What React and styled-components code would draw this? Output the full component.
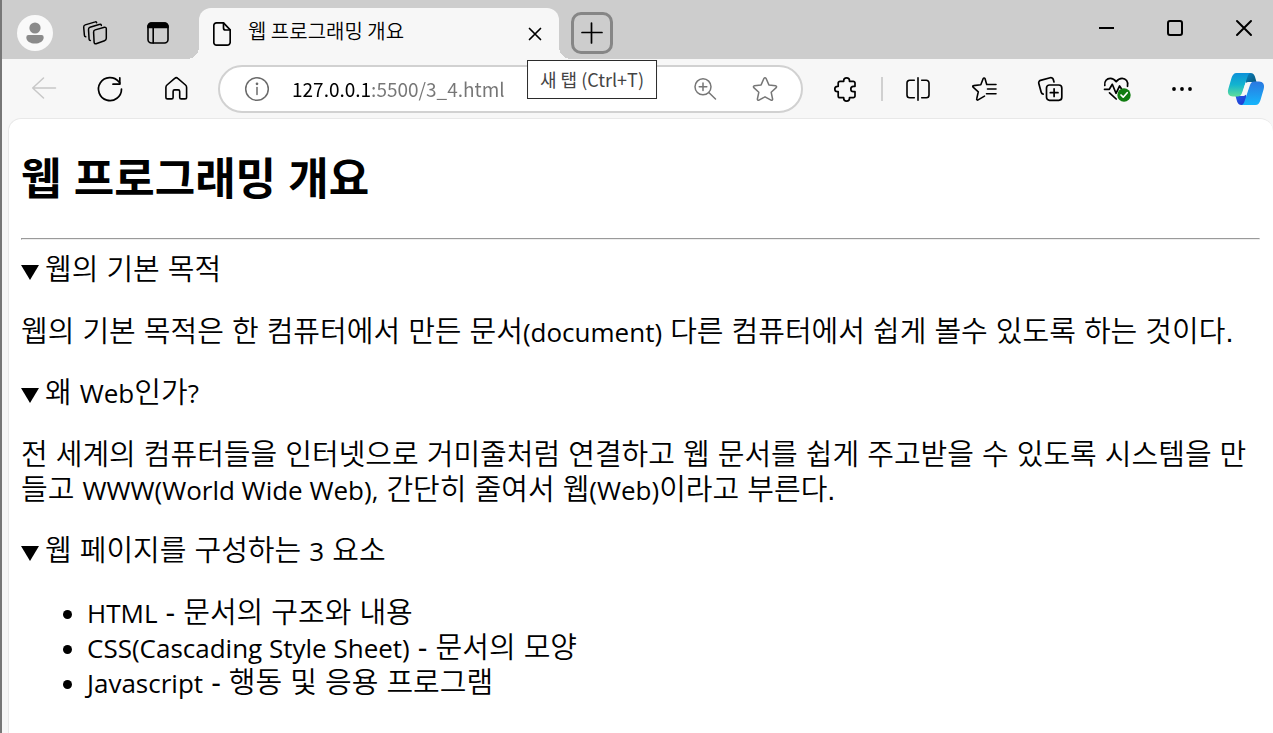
import { useState } from 'react';
import styled, { createGlobalStyle } from 'styled-components';

const GlobalStyle = createGlobalStyle`
  * {
    box-sizing: border-box;
  }

  body {
    margin: 0;
    background: #f7f7f7;
    color: #000;
    font-family: 'Noto Sans CJK KR', sans-serif;
  }
`;

const Window = styled.div`
  display: flex;
  flex-direction: column;
  min-height: 100vh;
  border-left: 2px solid #777;
  background: #f7f7f7;
`;

const TabStrip = styled.header`
  display: flex;
  height: 59px;
  padding-left: 15px;
  background: #cdcdcd;
`;

const StripTools = styled.div`
  display: flex;
  align-items: center;
  gap: 22px;
  height: 50px;
  margin-top: 8px;
  padding-right: 22px;
`;

const IconButton = styled.button`
  display: flex;
  flex: none;
  align-items: center;
  justify-content: center;
  width: ${({ $width }) => $width || 40}px;
  height: 40px;
  padding: 0;
  border: 0;
  background: none;
  color: ${({ $color }) => $color || '#000'};

  svg {
    flex: none;
    overflow: visible;
  }
`;

const ProfileButton = styled(IconButton)`
  width: 36px;
  height: 36px;
  border-radius: 50%;
  background: #f9f9f9;
`;

const Tab = styled.div`
  position: relative;
  display: flex;
  flex: 0 1 360px;
  align-items: center;
  min-width: 0;
  height: 51px;
  margin-top: 8px;
  padding: 0 4px 0 14px;
  border-radius: 12px 12px 0 0;
  background: #f7f7f7;

  &::before,
  &::after {
    content: '';
    position: absolute;
    bottom: 0;
    width: 12px;
    height: 12px;
  }

  &::before {
    right: 100%;
    background: radial-gradient(circle at 0 0, transparent 12px, #f7f7f7 12px);
  }

  &::after {
    left: 100%;
    background: radial-gradient(circle at 100% 0, transparent 12px, #f7f7f7 12px);
  }
`;

const TabTitle = styled.span`
  flex: 1;
  padding: 0 0 6px 17px;
  overflow: hidden;
  font-size: 20px;
  font-weight: 350;
  line-height: 28px;
  text-overflow: ellipsis;
  white-space: nowrap;
`;

const NewTab = styled.div`
  position: relative;
  margin: 12px 0 0 12px;
`;

const NewTabButton = styled(IconButton)`
  width: 42px;
  height: 42px;
  border: 3px solid #868686;
  border-radius: 10px;
`;

const Tooltip = styled.span`
  position: absolute;
  top: 48px;
  left: 50%;
  z-index: 1;
  padding: 5px 12px;
  border: 1px solid #2b2b2b;
  background: #fff;
  color: #444;
  font-size: 18px;
  line-height: 27px;
  white-space: nowrap;
  transform: translateX(-50%);
`;

const WindowControls = styled.div`
  display: flex;
  gap: 11px;
  margin: 8px 0 0 auto;
`;

const Toolbar = styled.nav`
  display: flex;
  align-items: center;
  height: 59px;
  padding: 0 9px 0 22px;
`;

const ToolGroup = styled.div`
  display: flex;
  align-items: center;
  gap: 26px;
`;

const Divider = styled.span`
  width: 2px;
  height: 24px;
  margin: 0 15px 0 16px;
  background: #d0d0d0;
`;

const AddressBar = styled.form`
  display: flex;
  flex: 1;
  align-items: center;
  min-width: 0;
  height: 48px;
  margin: 0 22px;
  padding: 0 16px 0 17px;
  border: 2px solid #d1d1d1;
  border-radius: 24px;
  background: #fff;
`;

/* host part is black, the rest of the address is grey */
const AddressInput = styled.input`
  flex: 1;
  min-width: 0;
  height: 36px;
  margin: 0 20px 0 15px;
  padding: 0;
  border: 0;
  outline: 0;
  background: linear-gradient(to right, #000 79px, #767676 79px);
  background-clip: text;
  -webkit-text-fill-color: transparent;
  font-family: 'Noto Sans CJK KR', sans-serif;
  font-size: 19px;
`;

const AddressActions = styled.div`
  display: flex;
  gap: 20px;
`;

const Page = styled.main`
  flex: 1;
  margin-left: 6px;
  padding: 0 13px 0 12px;
  border: 1px solid #e8e8e8;
  border-width: 1px 0 0 1px;
  border-radius: 13px 13px 0 0;
  background: #fff;
  font-family: 'Liberation Sans', 'Noto Sans CJK KR', sans-serif;
  font-size: 29px;
  font-weight: 350;
  line-height: 35px;

  h2 {
    margin: 34px 0 32px;
    font-size: 44px;
    font-weight: 700;
    line-height: 53px;
  }

  hr {
    margin: 13px 0;
  }

  p {
    margin: 27px 0 26px;
    word-break: normal;
  }

  ul {
    margin: 27px 0;
    padding-left: 66px;
  }
`;

const Summary = styled.summary`
  list-style: none;

  &::before {
    content: '';
    display: inline-block;
    width: 18px;
    height: 15px;
    margin-right: 6px;
    background: #000;
    clip-path: polygon(0 0, 100% 0, 50% 100%);
  }
`;

const Latin = styled.span`
  font-family: 'Open Sans', sans-serif;
  font-size: 26px;
  font-weight: 400;
  line-height: 26px;
`;

const Svg = ({ w = 24, h = 24, stroke = 2, children }) => (
  <svg
    width={w}
    height={h}
    viewBox={`0 0 ${w} ${h}`}
    fill="none"
    stroke="currentColor"
    strokeWidth={stroke}
    strokeLinecap="round"
    strokeLinejoin="round"
    aria-hidden="true"
  >
    {children}
  </svg>
);

const ProfileIcon = () => (
  <Svg>
    <g fill="#8b8b8b" stroke="none">
      <circle cx="12" cy="7" r="5.6" />
      <path d="M5.5 14h13a2.2 2.2 0 0 1 2.2 2.2c0 4-4 6.300-8.700 6.300s-8.700-2.300-8.700-6.300A2.200 2.200 0 0 1 5.500 14z" />
    </g>
  </Svg>
);

const WorkspacesIcon = () => (
  <Svg stroke={1.5}>
    <path d="M12.200 8.900 21.400 6.200a1.500 1.500 0 0 1 1.900 1.500v9.600a2.500 2.500 0 0 1-1.800 2.400l-8.400 3a1.500 1.500 0 0 1-2-1.400l-.5-10.200a2.200 2.200 0 0 1 1.600-2.200z" />
    <path d="M18.300 4.600v-.3a1 1 0 0 0-1.400-1L7 6.300a2.200 2.200 0 0 0-1.500 2.300l.6 9.700a1.200 1.200 0 0 0 1.300 1.100" />
    <path d="M13.600 1.800v-.1a1 1 0 0 0-1.300-.8L2.200 3.900A2.200 2.200 0 0 0 .7 6.200l.7 8a1.600 1.600 0 0 0 1.300 1.600" />
  </Svg>
);

const SidebarIcon = () => (
  <Svg stroke={1.6}>
    <rect x="3" y="2" width="20" height="20" rx="3.500" />
    <path d="M3 6.500v-1A3.500 3.500 0 0 1 6.500 2h13A3.500 3.500 0 0 1 23 5.500v1z" fill="currentColor" />
    <path d="M8.200 7v15" />
  </Svg>
);

const FileIcon = () => (
  <Svg w={18} h={26} stroke={1.700}>
    <path d="M3.500 1.800h7l6.700 7v12.400a3 3 0 0 1-3 3H3.500a2.700 2.700 0 0 1-2.700-2.700v-17a2.700 2.700 0 0 1 2.700-2.700z" />
    <path d="M10.500 2v5a2 2 0 0 0 2 2h4.600" />
  </Svg>
);

const BackIcon = () => (
  <Svg stroke={1.5}>
    <path d="M23.500 11H.7M11.500 1 .7 11l10.800 10" />
  </Svg>
);

const ReloadIcon = () => (
  <Svg stroke={1.700}>
    <path d="M23.500 12A11.500 11.500 0 1 1 20.800 4.700L21.800 6" />
    <path d="M21.800.8v6.400H15" />
  </Svg>
);

const HomeIcon = () => (
  <Svg stroke={1.600}>
    <path d="M10.700 1.300 3 8a3.200 3.200 0 0 0-1.100 2.400v9.800a1.700 1.700 0 0 0 1.700 1.700h4a1.500 1.500 0 0 0 1.500-1.500v-6a1.500 1.500 0 0 1 1.500-1.500h3.600a1.500 1.500 0 0 1 1.500 1.500v6a1.500 1.500 0 0 0 1.500 1.500h3.700a1.700 1.700 0 0 0 1.700-1.700v-9.800A3.200 3.200 0 0 0 21.500 8l-7.700-6.700a2.300 2.300 0 0 0-3.100 0z" />
  </Svg>
);

const InfoIcon = () => (
  <Svg stroke={1.500}>
    <circle cx="12" cy="12" r="11.300" />
    <path d="M12 10.500v7" />
    <circle cx="12" cy="6.800" r=".6" fill="currentColor" />
  </Svg>
);

const ZoomIcon = () => (
  <Svg stroke={1.500}>
    <circle cx="10" cy="9.800" r="8" />
    <path d="M15.800 15.500 22.500 22M10 6v7.600M6.200 9.800h7.600" />
  </Svg>
);

const StarIcon = () => (
  <Svg stroke={1.500}>
    <path d="M11 1.300a1.200 1.200 0 0 1 2 0l2.900 6.600 6.700.8a1.100 1.100 0 0 1 .6 1.900l-5 4.700 1.400 6.700a1.100 1.100 0 0 1-1.600 1.200L12 19.800l-6 3.400A1.100 1.100 0 0 1 4.400 22l1.400-6.700-5-4.700a1.100 1.100 0 0 1 .6-1.900l6.700-.8z" />
  </Svg>
);

const PuzzleIcon = () => (
  <Svg stroke={1.700}>
    <path d="M7 4.300h3.700v-.6a2.900 2.900 0 0 1 5.800 0v.6h3.700a1.800 1.800 0 0 1 1.800 1.800v3.200h-1.500a2.700 2.700 0 0 0 0 5.400H22v4.200a1.800 1.800 0 0 1-1.800 1.800h-3.700v.5a2.900 2.900 0 0 1-5.800 0v-.5H7a1.800 1.800 0 0 1-1.800-1.800v-4.200h-.7a2.700 2.700 0 0 1 0-5.400h.7V6.100A1.800 1.800 0 0 1 7 4.300z" />
  </Svg>
);

const SplitIcon = () => (
  <Svg stroke={1.600}>
    <path d="M12 .7v22.600M8.300 3.300H3.700A2.700 2.700 0 0 0 1 6v12a2.700 2.700 0 0 0 2.700 2.700h4.600M15.700 3.300h4.600A2.700 2.700 0 0 1 23 6v12a2.700 2.700 0 0 1-2.700 2.700h-4.600" />
  </Svg>
);

const FavoritesIcon = () => (
  <Svg stroke={1.600}>
    <path d="M14.700 7.500 13 1.500a1 1 0 0 0-1.800 0L8.800 7.700l-7.200.9a.9.9 0 0 0-.5 1.600l5.200 4.600-1.600 7.100a.9.9 0 0 0 1.400 1l6.400-3.800M15.500 7.500H24M15.500 12H24M14.500 16.700H24" />
  </Svg>
);

const CollectionsIcon = () => (
  <Svg stroke={1.700}>
    <rect x="8.500" y="8" width="15.300" height="15.300" rx="3" />
    <path d="M16.100 11.800v7.700M12.300 15.700H20M16 5l-.7-2.500A2.500 2.500 0 0 0 12.200.8L2.500 3.400A2.500 2.500 0 0 0 .8 6.500l2.400 8.800a2.500 2.500 0 0 0 2 1.800" />
  </Svg>
);

const HealthIcon = () => (
  <Svg w={28} h={28} stroke={1.700}>
    <path d="M2.800 10.500C2 6 5 3.300 8.300 3.300c2.500 0 4.300 1.200 5.900 3.400 1.600-2.200 3.400-3.400 5.900-3.400 3.600 0 6.600 3.200 5.400 8M2.500 14.300h4.800l3-5 3.700 9 3.600-7.300 2 3M7.500 17.800l6.700 6.200" />
    <circle cx="22" cy="20" r="6.700" fill="#107c10" stroke="none" />
    <path d="m19 20 2.200 2.200 4-4.500" stroke="#fff" />
  </Svg>
);

const MoreIcon = () => (
  <Svg>
    <g fill="currentColor" stroke="none">
      <circle cx="4" cy="12" r="1.900" />
      <circle cx="12" cy="12" r="1.900" />
      <circle cx="20" cy="12" r="1.900" />
    </g>
  </Svg>
);

const CopilotIcon = () => (
  <svg width="36" height="32" viewBox="0 0 36 32" aria-hidden="true">
    <defs>
      <linearGradient id="cp-left" x1="0" y1="0" x2="0" y2="1">
        <stop offset="0" stopColor="#0d91d9" />
        <stop offset=".5" stopColor="#12b4cf" />
        <stop offset="1" stopColor="#5fdd9a" />
      </linearGradient>
      <linearGradient id="cp-right" x1="0" y1="0" x2="0" y2="1">
        <stop offset="0" stopColor="#2b78e0" />
        <stop offset="1" stopColor="#15b5fb" />
      </linearGradient>
      <linearGradient id="cp-top" x1="0" y1="0" x2="1" y2="1">
        <stop offset="0" stopColor="#0b84c8" />
        <stop offset="1" stopColor="#08536f" />
      </linearGradient>
      <linearGradient id="cp-bottom" x1="0" y1="0" x2="1" y2="1">
        <stop offset="0" stopColor="#2a5ce6" />
        <stop offset="1" stopColor="#1a35cf" />
      </linearGradient>
    </defs>
    <path d="M17 0h5.500c2.500 0 3.800 1.700 4.400 3.600L28.500 9H22c-1.500 0-3 .5-4 1.500z" fill="url(#cp-top)" />
    <path d="M19 32h-5.500c-2.500 0-3.800-1.700-4.400-3.600L7.500 23H14c1.500 0 3-.5 4-1.500z" fill="url(#cp-bottom)" />
    <path d="M8.500 0H23c-2 0-3 2-3.600 4L14 20c-.9 2.500-2.200 3.500-4.500 3.500H5c-4 0-6-3-4.700-7.500L3.500 5C4.400 2 6 0 8.500 0z" fill="url(#cp-left)" />
    <path d="M27.500 32H13c2 0 3-2 3.600-4L22 12c.9-2.500 2.200-3.500 4.500-3.500H31c4 0 6 3 4.700 7.500L32.500 27c-.9 3-2.500 5-5 5z" fill="url(#cp-right)" />
    <path d="M17.300 10.500c1-1.200 2.600-1.500 5.200-1.500-.8.700-1.200 1.800-1.600 3l-3 9c-1 1.500-3 2-4.900 2 .8-.7 1.200-1.800 1.600-3z" fill="#f7f7f7" />
  </svg>
);

const App = () => {
  const [address, setAddress] = useState('127.0.0.1:5500/3_4.html');

  return (
    <>
      <GlobalStyle />
      <Window>
        <TabStrip>
          <StripTools>
            <ProfileButton aria-label="프로필">
              <ProfileIcon />
            </ProfileButton>
            <IconButton aria-label="작업 영역">
              <WorkspacesIcon />
            </IconButton>
            <IconButton aria-label="탭 작업 메뉴">
              <SidebarIcon />
            </IconButton>
          </StripTools>
          <Tab>
            <FileIcon />
            <TabTitle>웹 프로그래밍 개요</TabTitle>
            <IconButton aria-label="탭 닫기">
              <Svg w={12} h={12} stroke={1.700}>
                <path d="m.5.5 11 11M11.500.5l-11 11" />
              </Svg>
            </IconButton>
          </Tab>
          <NewTab>
            <NewTabButton aria-label="새 탭" aria-describedby="new-tab-tip">
              <Svg w={20} h={20} stroke={1.700}>
                <path d="M9.500 0v20M0 9.500h20" />
              </Svg>
            </NewTabButton>
            <Tooltip id="new-tab-tip" role="tooltip">
              새 탭 (Ctrl+T)
            </Tooltip>
          </NewTab>
          <WindowControls>
            <IconButton $width={58} aria-label="최소화">
              <Svg w={14} h={14}>
                <path d="M0 7h15" strokeLinecap="butt" />
              </Svg>
            </IconButton>
            <IconButton $width={58} aria-label="최대화">
              <Svg w={16} h={16}>
                <rect x="1" y="1" width="14" height="14" rx="2" />
              </Svg>
            </IconButton>
            <IconButton $width={58} aria-label="닫기">
              <Svg w={14} h={14}>
                <path d="m0 0 14 14M14 0 0 14" />
              </Svg>
            </IconButton>
          </WindowControls>
        </TabStrip>

        <Toolbar>
          <ToolGroup>
            <IconButton $color="#c8c8c8" aria-label="뒤로">
              <BackIcon />
            </IconButton>
            <IconButton aria-label="새로 고침">
              <ReloadIcon />
            </IconButton>
            <IconButton aria-label="홈">
              <HomeIcon />
            </IconButton>
          </ToolGroup>
          <AddressBar onSubmit={(e) => e.preventDefault()}>
            <IconButton type="button" $color="#6b6b6b" aria-label="사이트 정보 보기">
              <InfoIcon />
            </IconButton>
            <AddressInput
              aria-label="주소창"
              spellCheck={false}
              value={address}
              onChange={(e) => setAddress(e.target.value)}
            />
            <AddressActions>
              <IconButton type="button" $color="#767676" aria-label="확대/축소">
                <ZoomIcon />
              </IconButton>
              <IconButton type="button" $color="#767676" aria-label="즐겨찾기에 추가">
                <StarIcon />
              </IconButton>
            </AddressActions>
          </AddressBar>
          <IconButton aria-label="확장">
            <PuzzleIcon />
          </IconButton>
          <Divider />
          <ToolGroup>
            <IconButton aria-label="화면 분할">
              <SplitIcon />
            </IconButton>
            <IconButton aria-label="즐겨찾기">
              <FavoritesIcon />
            </IconButton>
            <IconButton aria-label="컬렉션">
              <CollectionsIcon />
            </IconButton>
            <IconButton aria-label="브라우저 필수 요소">
              <HealthIcon />
            </IconButton>
            <IconButton aria-label="설정 및 기타">
              <MoreIcon />
            </IconButton>
            <IconButton $width={36} aria-label="Copilot">
              <CopilotIcon />
            </IconButton>
          </ToolGroup>
        </Toolbar>

        <Page>
          <h2>웹 프로그래밍 개요</h2>
          <hr />
          <details open>
            <Summary>웹의 기본 목적</Summary>
            <p>
              웹의 기본 목적은 한 컴퓨터에서 만든 문서<Latin>(document)</Latin> 다른 컴퓨터에서 쉽게 볼수 있도록 하는
              것이다.
            </p>
          </details>
          <details open>
            <Summary>
              왜 <Latin>Web</Latin>인가<Latin>?</Latin>
            </Summary>
            <p>
              전 세계의 컴퓨터들을 인터넷으로 거미줄처럼 연결하고 웹 문서를 쉽게 주고받을 수 있도록 시스템을 만들고{' '}
              <Latin>WWW(World Wide Web),</Latin> 간단히 줄여서 웹<Latin>(Web)</Latin>이라고 부른다.
            </p>
          </details>
          <details open>
            <Summary>
              웹 페이지를 구성하는 <Latin>3</Latin> 요소
            </Summary>
            <ul>
              <li>
                <Latin>HTML</Latin> - 문서의 구조와 내용
              </li>
              <li>
                <Latin>CSS(Cascading Style Sheet)</Latin> - 문서의 모양
              </li>
              <li>
                <Latin>Javascript</Latin> - 행동 및 응용 프로그램
              </li>
            </ul>
          </details>
        </Page>
      </Window>
    </>
  );
};

export default App;
